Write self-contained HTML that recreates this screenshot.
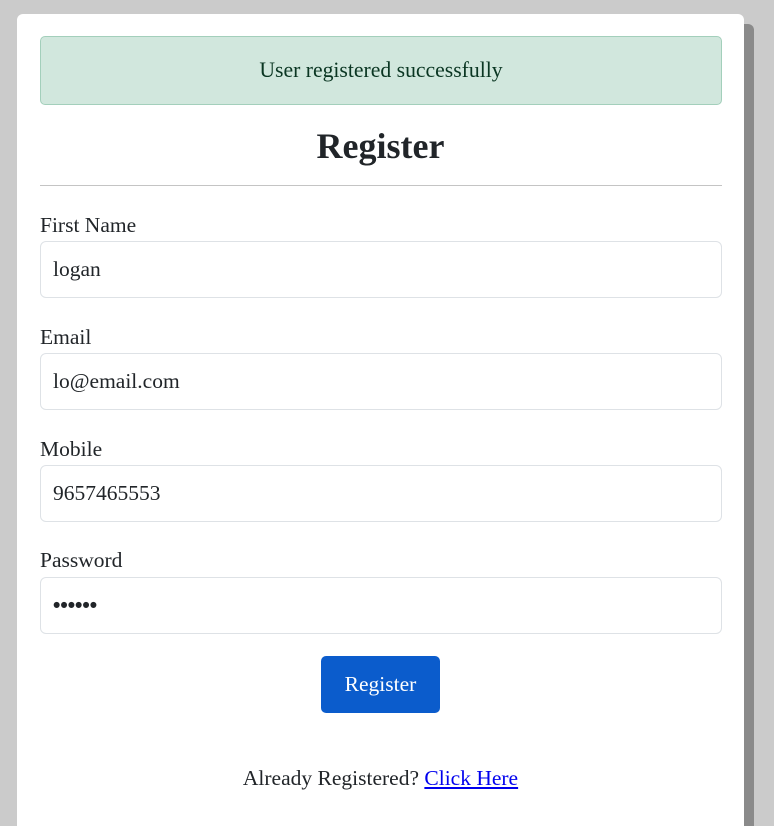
<!DOCTYPE html>
<html style="overflow:hidden;height:826px"><head><style>
body{margin:0;background:#cbcbcb;width:774px;height:826px;overflow:hidden;font-family:"Liberation Serif",serif;color:#212529;position:relative}
.shadow{position:absolute;left:27px;top:24px;width:727px;height:802px;background:#8a8a8a;border-radius:6px 6px 0 0}
.card{position:absolute;left:17px;top:14px;width:727px;height:812px;background:#fff;border-radius:6px 6px 0 0}
.alert{position:absolute;left:23px;top:22px;width:680px;height:67px;background:#d1e7dd;border:1px solid #a3cfbb;border-radius:5px;color:#0a3622;font-size:21.7px;text-align:center;line-height:67px}
h1{position:absolute;left:0;width:727px;top:110px;margin:0;text-align:center;font-size:36px;font-weight:bold;line-height:44px}
.hr{position:absolute;left:23px;top:171px;width:682px;height:1px;background:#c4c4c4}
.lbl{position:absolute;left:23px;font-size:21.5px;line-height:24px}
.inp{position:absolute;left:23px;height:55px;border:1px solid #dee2e6;border-radius:6px;font-size:21.5px;line-height:55px;padding-left:12px;width:668px}
.btn{position:absolute;left:304px;top:642px;width:119px;height:57px;background:#0b5ccc;border-radius:5px;color:#fff;font-size:21.5px;text-align:center;line-height:57px}
.foot{position:absolute;left:0;width:727px;top:752px;text-align:center;font-size:21.5px;line-height:24px}
a{color:#0000ee}
</style></head><body>
<div class="shadow"></div>
<div class="card">
<div class="alert">User registered successfully</div>
<h1>Register</h1>
<div class="hr"></div>
<div class="lbl" style="top:199px">First Name</div>
<div class="inp" style="top:227px">logan</div>
<div class="lbl" style="top:311px">Email</div>
<div class="inp" style="top:339px">lo@email.com</div>
<div class="lbl" style="top:423px">Mobile</div>
<div class="inp" style="top:451px">9657465553</div>
<div class="lbl" style="top:534px">Password</div>
<div class="inp" style="top:563px;font-family:'Liberation Sans',sans-serif;font-size:21px;font-weight:bold">••••••</div>
<div class="btn">Register</div>
<div class="foot">Already Registered? <a href="#">Click Here</a></div>
</div>
</body></html>
